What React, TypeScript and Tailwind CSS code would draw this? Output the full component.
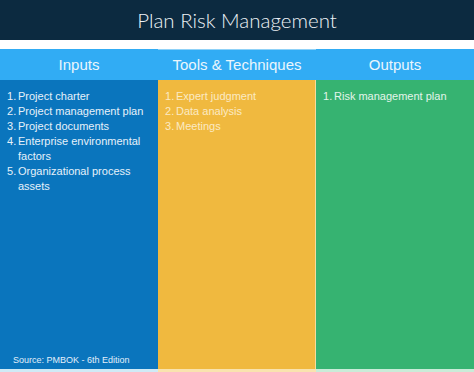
import React from 'react';

interface Column {
  title: string;
  items: string[];
  body: string;
  text: string;
  foot: string;
}

const columns: Column[] = [
  {
    title: 'Inputs',
    items: [
      'Project charter',
      'Project management plan',
      'Project documents',
      'Enterprise environmental factors',
      'Organizational process assets',
    ],
    body: 'bg-[#0a75bd]',
    text: 'text-[#e6f1fa]',
    foot: 'bg-[#cfeaf6]',
  },
  {
    title: 'Tools & Techniques',
    items: ['Expert judgment', 'Data analysis', 'Meetings'],
    body: 'bg-[#f0b93f] border-r border-[#f7dc9c]',
    text: 'text-[#fbeac4]',
    foot: 'bg-[#f9e3ae]',
  },
  {
    title: 'Outputs',
    items: ['Risk management plan'],
    body: 'bg-[#36b371]',
    text: 'text-[#e3f5ea]',
    foot: 'bg-[#c9ecd8]',
  },
];

const App: React.FC = () => {
  return (
    <div className="w-[474px] h-[372px] bg-white flex flex-col overflow-hidden font-['Liberation_Sans',Arial,sans-serif]">
      {/* Title */}
      <div className="h-[40px] bg-[#0c2a40] flex items-center justify-center">
        <h1 className="text-[20.5px] text-[#eef3f7] font-['Lato',sans-serif] font-light">
          Plan Risk Management
        </h1>
      </div>

      <div className="h-[9px] bg-white" />

      {/* Header row */}
      <div className="h-[31px] bg-[#31acf4] grid grid-cols-3">
        {columns.map((col, i) => (
          <div
            key={col.title}
            className={`flex items-center justify-center pt-[1px] text-[15px] text-[#eaf6fd] ${i === 1 ? 'border-t border-[#8fd2f8]' : ''}`}
          >
            {col.title}
          </div>
        ))}
      </div>

      {/* Column bodies */}
      <div className="flex-1 grid grid-cols-3">
        {columns.map((col, i) => (
          <div key={col.title} className="flex flex-col">
            <div className={`flex-1 flex flex-col justify-between pt-[9px] pl-[7px] pr-[6px] pb-[2px] ${col.body}`}>
              <ol className={`text-[11px] leading-[15px] ${col.text}`}>
                {col.items.map((item, n) => (
                  <li key={item} className="flex">
                    <span className="w-[11px] shrink-0">{n + 1}.</span>
                    <span>{item}</span>
                  </li>
                ))}
              </ol>
              {i === 0 && (
                <p className="text-[9px] text-[#e2effa] pl-[6px]">Source: PMBOK - 6th Edition</p>
              )}
            </div>
            <div className={`h-[3px] ${col.foot}`} />
          </div>
        ))}
      </div>
    </div>
  );
};

export default App;
